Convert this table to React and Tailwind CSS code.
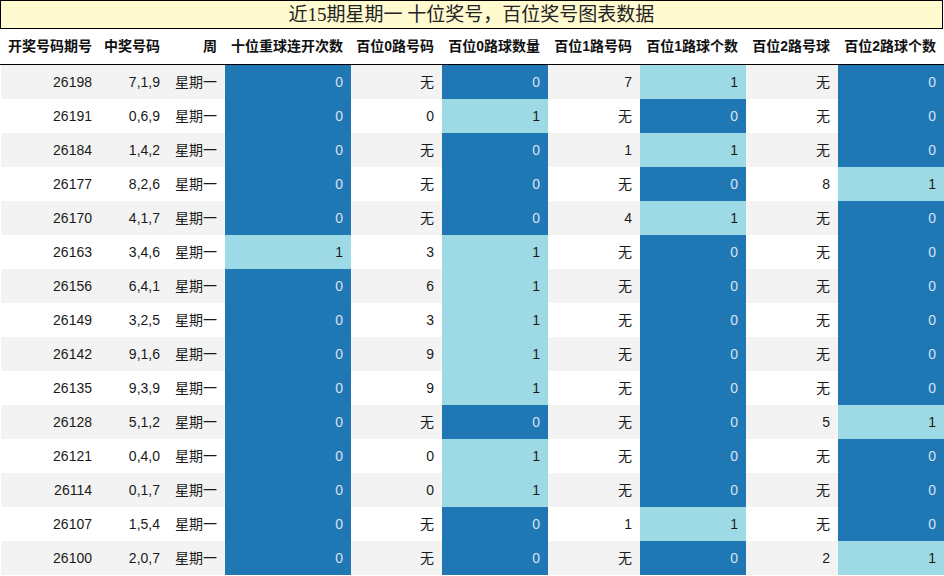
import React from "react";

const rows = [
  ["26198", "7,1,9", 0, "无", 0, "7", 1, "无", 0],
  ["26191", "0,6,9", 0, "0", 1, "无", 0, "无", 0],
  ["26184", "1,4,2", 0, "无", 0, "1", 1, "无", 0],
  ["26177", "8,2,6", 0, "无", 0, "无", 0, "8", 1],
  ["26170", "4,1,7", 0, "无", 0, "4", 1, "无", 0],
  ["26163", "3,4,6", 1, "3", 1, "无", 0, "无", 0],
  ["26156", "6,4,1", 0, "6", 1, "无", 0, "无", 0],
  ["26149", "3,2,5", 0, "3", 1, "无", 0, "无", 0],
  ["26142", "9,1,6", 0, "9", 1, "无", 0, "无", 0],
  ["26135", "9,3,9", 0, "9", 1, "无", 0, "无", 0],
  ["26128", "5,1,2", 0, "无", 0, "无", 0, "5", 1],
  ["26121", "0,4,0", 0, "0", 1, "无", 0, "无", 0],
  ["26114", "0,1,7", 0, "0", 1, "无", 0, "无", 0],
  ["26107", "1,5,4", 0, "无", 0, "1", 1, "无", 0],
  ["26100", "2,0,7", 0, "无", 0, "无", 0, "2", 1],
];

const headers = [
  "开奖号码期号",
  "中奖号码",
  "周",
  "十位重球连开次数",
  "百位0路号码",
  "百位0路球数量",
  "百位1路号码",
  "百位1路球个数",
  "百位2路号球",
  "百位2路球个数",
];

const grid =
  "grid grid-cols-[99px_68px_57px_126px_91px_106px_92px_106px_92px_106px]";

function Colored({ v }) {
  return v === 0 ? (
    <div className="flex items-center justify-end pr-2 bg-[#1f77b4] text-[#d6e4f0]">
      {v}
    </div>
  ) : (
    <div className="flex items-center justify-end pr-2 bg-[#9edae5] text-[#1a1a1a]">
      {v}
    </div>
  );
}

function Plain({ children }) {
  return (
    <div className="flex items-center justify-end pr-2 pt-px text-[#1a1a1a]">
      {children}
    </div>
  );
}

export default function App() {
  return (
    <div className="w-[944px] h-[576px] overflow-hidden bg-white font-['Liberation_Sans','Noto_Sans_CJK_SC',sans-serif]">
      <div className="h-[29px] w-[943px] border border-black bg-[#fffad0] flex items-center justify-center text-[19px] leading-none text-[#222] font-['Liberation_Serif','Noto_Sans_CJK_SC',serif]">
        近15期星期一 十位奖号，百位奖号图表数据
      </div>
      <div className="h-[36px] border-b border-black pl-px">
        <div className={`${grid} h-full text-[14px] font-bold text-[#111]`}>
          {headers.map((h, i) => (
            <div key={i} className="flex items-center justify-end pr-2">
              {h}
            </div>
          ))}
        </div>
      </div>
      <div className="pl-px">
        {rows.map((r, i) => (
          <div
            key={i}
            className={`${grid} h-[34px] text-[14px] ${
              i % 2 === 0 ? "bg-[#f3f3f3]" : "bg-white"
            }`}
          >
            <Plain>{r[0]}</Plain>
            <Plain>{r[1]}</Plain>
            <Plain>星期一</Plain>
            <Colored v={r[2]} />
            <Plain>{r[3]}</Plain>
            <Colored v={r[4]} />
            <Plain>{r[5]}</Plain>
            <Colored v={r[6]} />
            <Plain>{r[7]}</Plain>
            <Colored v={r[8]} />
          </div>
        ))}
      </div>
    </div>
  );
}
